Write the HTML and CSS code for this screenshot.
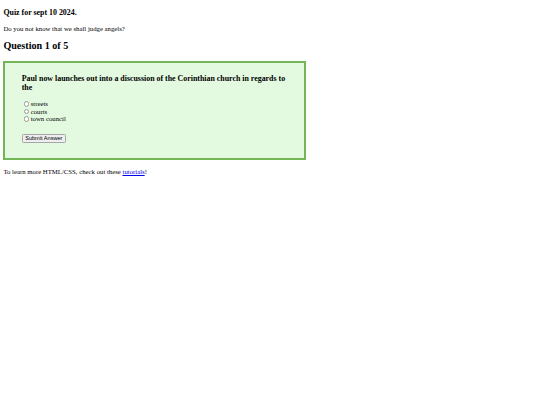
FILE: index.html
```html
<!DOCTYPE html>
<html>
<head>
<meta charset="utf-8">
<title>Quiz</title>
<link rel="stylesheet" href="styles.css">
</head>
<body>
<h3 class="title">Quiz for sept 10 2024.</h3>
<p class="intro">Do you not know that we shall judge angels?</p>
<h2 class="count">Question 1 of 5</h2>
<div class="quiz">
  <h3 class="question">Paul now launches out into a discussion of the Corinthian church in regards to the</h3>
  <form class="answers">
    <label class="option"><input type="radio" name="a" class="radio">streets</label><br>
    <label class="option"><input type="radio" name="a" class="radio">courts</label><br>
    <label class="option"><input type="radio" name="a" class="radio">town council</label><br>
    <div class="actions"><button type="button" class="submit">Submit Answer</button></div>
  </form>
</div>
<p class="footer">To learn more HTML/CSS, check out these <a href="#" class="link">tutorials</a>!</p>
</body>
</html>
```
FILE: styles.css
```css
html, body {
  background: #ffffff;
}
body {
  margin: 0;
  padding: 3.375px;
  font-family: "Liberation Serif", "Times New Roman", serif;
  font-size: 6.75px;
  color: #000;
}
.title {
  font-size: 7.9px;
  margin: 4.5px 0 7.9px;
}
.intro {
  margin: 6.75px 0;
}
.count {
  font-size: 10.125px;
  margin: 8.4px 0 9.4px;
}
.quiz {
  width: 268px;
  padding: 3.8px 14.5px 3.8px 16.3px;
  border: 2px solid #74b657;
  background: #e4fae0;
}
.question {
  font-size: 7.9px;
  margin: 7.9px 0;
}
.answers {
  margin: 0 0 11px;
}
.radio {
  appearance: none;
  -webkit-appearance: none;
  box-sizing: border-box;
  width: 5.7px;
  height: 5.7px;
  margin: 1.27px 1.27px 0 2.1px;
  vertical-align: -0.6px;
  border: 1px solid #9a9a9a;
  border-radius: 50%;
  background: #ffffff;
}
.actions {
  margin-top: 11.7px;
}
.submit {
  font-family: "Liberation Sans", Arial, sans-serif;
  font-size: 5.6px;
  padding: 0.45px 2.5px;
  border: 1px solid #a6a6a6;
  border-radius: 1.3px;
  background: #efefef;
  color: #000;
}
.footer {
  margin: 8.75px 0 6.75px;
}
.link {
  color: #0000ee;
}
```
